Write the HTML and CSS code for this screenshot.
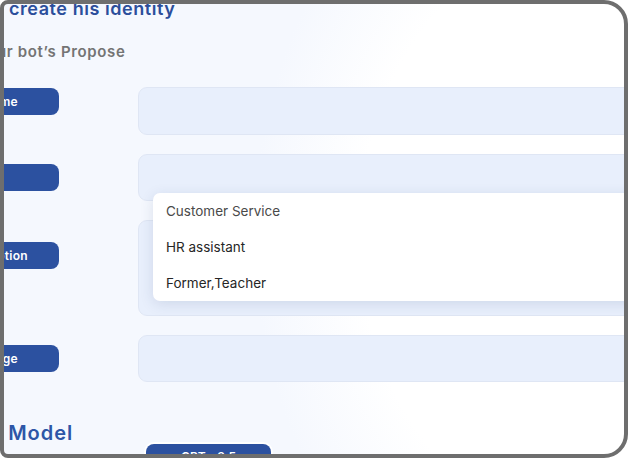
FILE: index.html
```html
<!DOCTYPE html>
<html lang="en">
<head>
<meta charset="utf-8">
<title>Create identity</title>
<link rel="stylesheet" href="styles.css">
</head>
<body>
<div class="frame">
  <div class="page">
    <h1 class="title">Let’s create his identity</h1>
    <p class="subtitle">Define your bot’s Propose</p>
    <div class="form">
      <div class="row row--short">
        <div class="label-col"><span class="pill pill--top1">Bot Name</span></div>
        <div class="field"></div>
      </div>
      <div class="row row--short">
        <div class="label-col"><span class="pill pill--hidden">Role</span></div>
        <div class="field"></div>
      </div>
      <div class="row row--tall">
        <div class="label-col label-col--top"><span class="pill pill--wide">Description</span></div>
        <div class="field"></div>
      </div>
      <div class="row row--short">
        <div class="label-col"><span class="pill">Language</span></div>
        <div class="field"></div>
      </div>
    </div>
    <h2 class="section">AI Model</h2>
    <div class="model-row"><span class="model-pill">GPT - 3.5</span></div>
  </div>
  <ul class="dropdown">
    <li class="dropdown__item dropdown__item--active">Customer Service</li>
    <li class="dropdown__item">HR assistant</li>
    <li class="dropdown__item">Former,Teacher</li>
  </ul>
</div>
</body>
</html>
```
FILE: styles.css
```css
* { box-sizing: border-box; }
html, body { margin: 0; padding: 0; background: #ffffff; }
body { font-family: "Inter", "Open Sans", sans-serif; }

.frame {
  position: relative;
  width: 628px;
  height: 458px;
  border: 4px solid #6e6e6e;
  border-radius: 8px 24px 24px 8px;
  overflow: hidden;
  background: radial-gradient(ellipse 330px 430px at 580px 230px, #ffffff 0%, #ffffff 68%, #f5f8fe 100%);
  background-color: #f5f8fe;
}

.page { width: 760px; }

.title {
  margin: -6px 0 0 -44px;
  font-size: 18px;
  line-height: 22px;
  font-weight: 600;
  letter-spacing: 0.55px;
  color: #2b4e9b;
  white-space: nowrap;
}

.subtitle {
  margin: 22px 0 0 -82px;
  font-size: 15px;
  line-height: 20px;
  font-weight: 600;
  letter-spacing: 0.65px;
  color: #747474;
  white-space: nowrap;
}

.form {
  margin-top: 25px;
  display: flex;
  flex-direction: column;
  gap: 19px;
}

.row { display: flex; align-items: center; }
.row--short { height: 47px; }
.row--short:first-child { height: 48px; }
.row--tall { height: 96px; }

.label-col {
  width: 134px;
  flex-shrink: 0;
  display: flex;
  justify-content: flex-end;
  padding-right: 79px;
}
.label-col--top { align-self: flex-start; padding-top: 22px; }

.pill {
  flex-shrink: 0;
  width: 120px;
  height: 27px;
  display: flex;
  align-items: center;
  justify-content: flex-end;
  padding-right: 41px;
  border-radius: 8px;
  background: #2c51a0;
  color: #ffffff;
  font-size: 12px;
  font-weight: 600;
  letter-spacing: 0.3px;
  white-space: nowrap;
}
.pill--top1 { align-self: flex-start; margin-top: -19px; }
.pill--hidden { padding-right: 60px; }
.pill--wide { padding-right: 31px; }

.field {
  flex-shrink: 0;
  width: 560px;
  height: 100%;
  background: #e8effc;
  border: 1px solid #dfe6f4;
  border-radius: 9px;
}

.section {
  margin: 39px 0 0 -26px;
  font-size: 20px;
  line-height: 24px;
  font-weight: 600;
  letter-spacing: 1px;
  word-spacing: 2px;
  color: #2d56a7;
  white-space: nowrap;
}

.model-row { padding-left: 142px; margin-top: -1px; }
.model-pill {
  display: inline-flex;
  justify-content: center;
  width: 125px;
  height: 28px;
  padding-top: 5px;
  border-radius: 8px;
  background: #2c51a0;
  box-shadow: 0 0 0 2px #ffffff;
  color: #ffffff;
  font-size: 12px;
  font-weight: 600;
}

.dropdown {
  position: absolute;
  left: 149px;
  top: 189px;
  width: 520px;
  margin: 0;
  padding: 0;
  list-style: none;
  background: #ffffff;
  border-radius: 7px;
  box-shadow: 0 3px 14px rgba(40, 60, 110, 0.13);
}
.dropdown__item {
  height: 36px;
  line-height: 36px;
  padding-left: 13px;
  font-size: 13.5px;
  color: #262626;
}
.dropdown__item--active { color: #4a4a4a; }
```
